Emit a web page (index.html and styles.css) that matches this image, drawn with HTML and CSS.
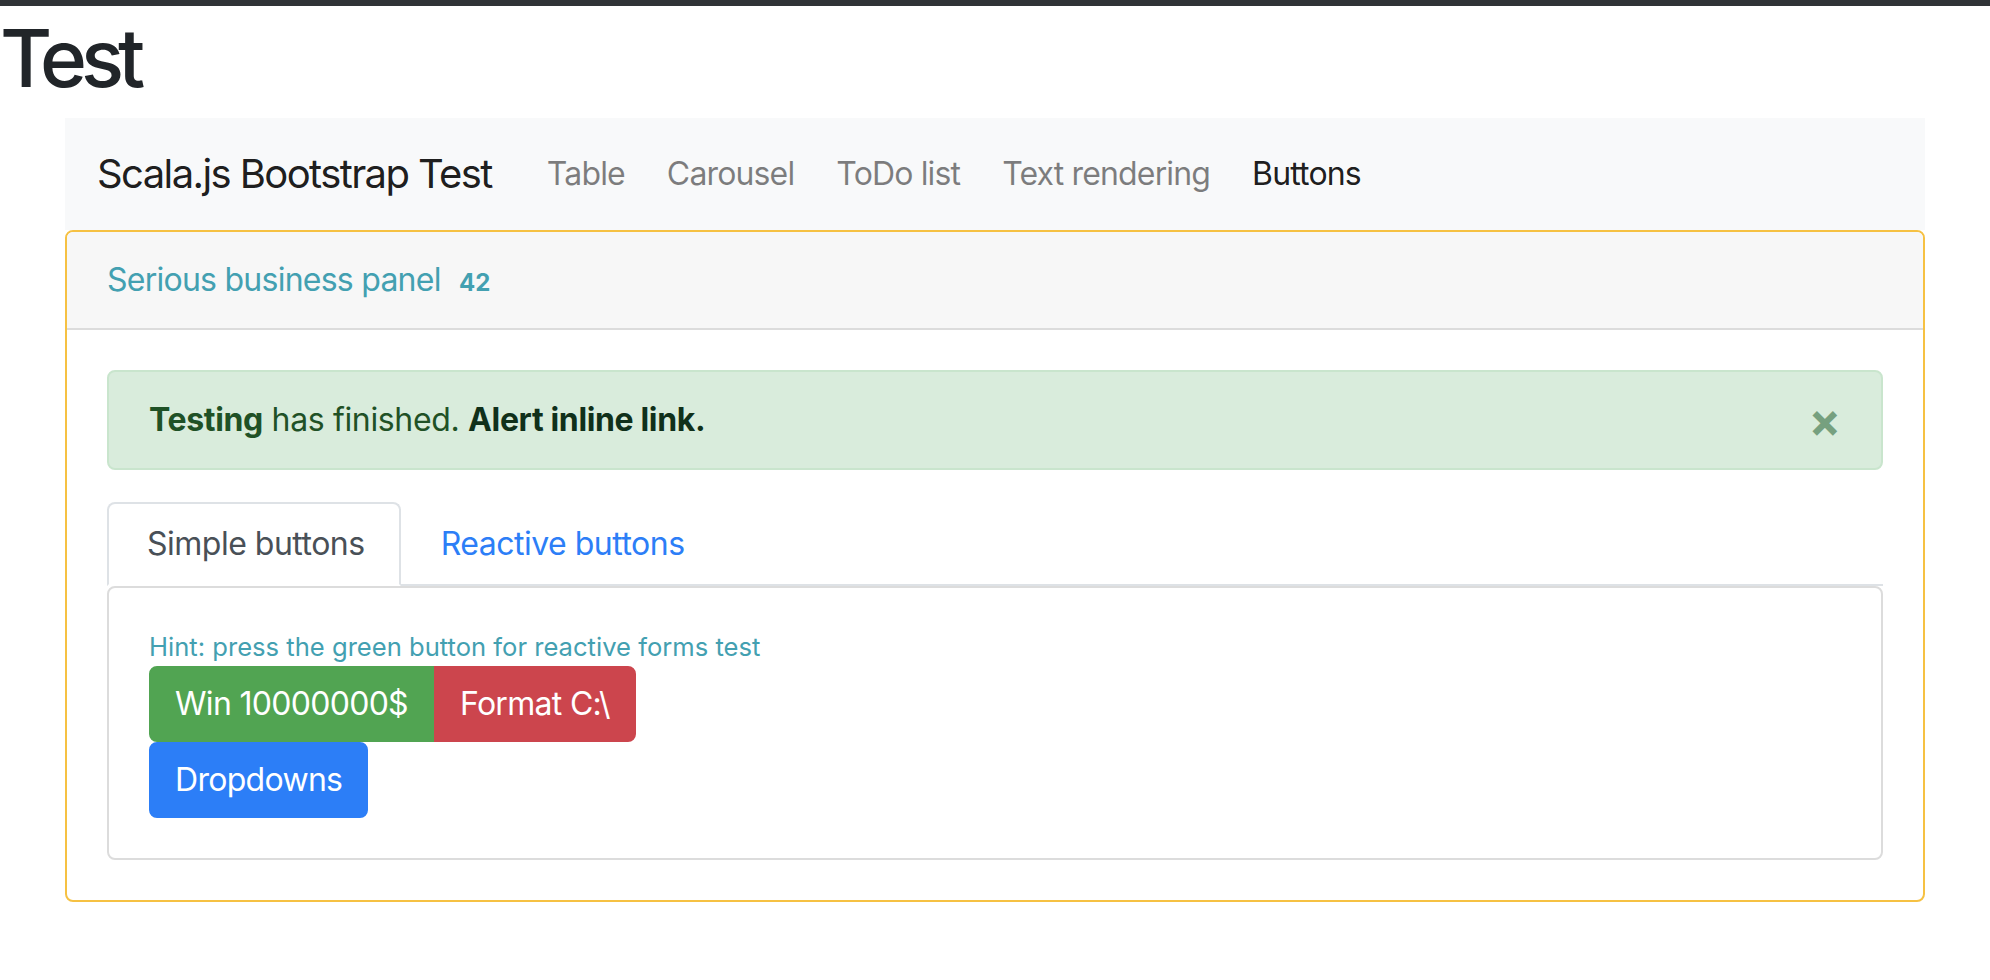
FILE: index.html
```html
<!DOCTYPE html>
<html lang="en">
<head>
<meta charset="utf-8">
<title>Test</title>
<link rel="stylesheet" href="styles.css">
</head>
<body>
<div class="topbar"></div>
<h1 class="title">Test</h1>
<div class="container">
  <nav class="navbar">
    <span class="brand">Scala.js Bootstrap Test</span>
    <ul class="nav-links">
      <li><a class="nav-link">Table</a></li>
      <li><a class="nav-link">Carousel</a></li>
      <li><a class="nav-link">ToDo list</a></li>
      <li><a class="nav-link">Text rendering</a></li>
      <li><a class="nav-link active">Buttons</a></li>
    </ul>
  </nav>
  <section class="card">
    <header class="card-header">Serious business panel <span class="badge">42</span></header>
    <div class="card-body">
      <div class="alert">
        <b>Testing</b> has finished. <a class="alert-link">Alert inline link.</a>
        <button class="close" type="button">&times;</button>
      </div>
      <ul class="tabs">
        <li><a class="tab active">Simple buttons</a></li>
        <li><a class="tab">Reactive buttons</a></li>
      </ul>
      <div class="tab-pane">
        <div class="hint">Hint: press the green button for reactive forms test</div>
        <div class="btn-group">
          <button class="btn btn-success" type="button">Win 10000000$</button>
          <button class="btn btn-danger" type="button">Format C:\</button>
        </div>
        <div class="dropdown">
          <button class="btn btn-primary" type="button">Dropdowns</button>
        </div>
      </div>
    </div>
  </section>
</div>
</body>
</html>
```

FILE: styles.css
```css
* { box-sizing: border-box; }
html, body { margin: 0; padding: 0; }
body {
  font-family: Inter, "Noto Sans", "Liberation Sans", sans-serif;
  font-size: 32px;
  line-height: 1.5;
  letter-spacing: -0.4px;
  color: #212529;
  background: #fff;
}
.topbar { height: 6px; background: #303337; }
.title {
  margin: 0 0 12px;
  padding-top: 4px;
  font-size: 80px;
  line-height: 96px;
  font-weight: 500;
  letter-spacing: -6px;
  color: #212529;
}
.container { max-width: 1860px; margin: 0 auto; }
.navbar {
  display: flex;
  align-items: center;
  padding: 16px 32px;
  background: #f8f9fa;
}
.brand {
  font-size: 40px;
  line-height: 60px;
  padding: 10px 0;
  margin-right: 34px;
  letter-spacing: -1.6px;
  color: rgba(0,0,0,.9);
}
.nav-links { display: flex; list-style: none; margin: 0; padding: 0; }
.nav-link {
  display: block;
  padding: 16px 21px;
  letter-spacing: -0.85px;
  color: rgba(0,0,0,.5);
  text-decoration: none;
}
.nav-link.active { color: rgba(0,0,0,.9); }
.card {
  border: 2px solid #f6c143;
  border-radius: 8px;
  overflow: hidden;
}
.card-header {
  padding: 24px 40px;
  background: #f7f7f7;
  border-bottom: 2px solid #dcdcdc;
  color: #43a0b1;
  letter-spacing: -0.75px;
}
.badge {
  display: inline-block;
  font-size: 24px;
  font-weight: 700;
  line-height: 1;
  padding: 6px 10px;
  letter-spacing: 0;
  vertical-align: baseline;
}
.card-body { padding: 40px; }
.alert {
  position: relative;
  padding: 24px 128px 24px 40px;
  margin-bottom: 32px;
  background: #d9ecdc;
  border: 2px solid #c9e5cd;
  border-radius: 8px;
  color: #1f5126;
  letter-spacing: -0.35px;
}
.alert b { font-weight: 700; }
.alert-link { font-weight: 700; color: #10301a; }
.close {
  position: absolute;
  top: 0;
  right: 0;
  padding: 24px 40px;
  border: 0;
  background: transparent;
  font-family: inherit;
  font-size: 48px;
  font-weight: 700;
  line-height: 48px;
  color: #155724;
  opacity: .5;
}
.tabs {
  display: flex;
  list-style: none;
  margin: 0;
  padding: 0;
  border-bottom: 2px solid #dee2e6;
}
.tab {
  display: block;
  padding: 16px 34px 16px 38px;
  margin-bottom: -2px;
  border: 2px solid transparent;
  border-radius: 8px 8px 0 0;
  letter-spacing: -0.5px;
  color: #2c7ef7;
  text-decoration: none;
}
.tab.active {
  color: #495057;
  background: #fff;
  border-color: #dee2e6 #dee2e6 #fff;
}
.tab-pane {
  border: 2px solid #dcdcdc;
  border-radius: 8px;
  padding: 40px;
}
.hint {
  font-size: 25.6px;
  line-height: 38px;
  letter-spacing: 0;
  color: #43a0b1;
}
.btn-group { display: inline-flex; vertical-align: top; }
.btn {
  display: inline-block;
  padding: 12px 24px;
  border: 2px solid transparent;
  border-radius: 8px;
  font-family: inherit;
  font-size: 32px;
  line-height: 48px;
  letter-spacing: -0.7px;
  color: #fff;
}
.btn-group .btn:first-child { border-top-right-radius: 0; border-bottom-right-radius: 0; }
.btn-group .btn:last-child { border-top-left-radius: 0; border-bottom-left-radius: 0; }
.btn-success { background: #51a452; border-color: #51a452; }
.btn-danger { background: #cc454d; border-color: #cc454d; }
.btn-primary { background: #2c7ef7; border-color: #2c7ef7; }
.dropdown { display: block; }
```
